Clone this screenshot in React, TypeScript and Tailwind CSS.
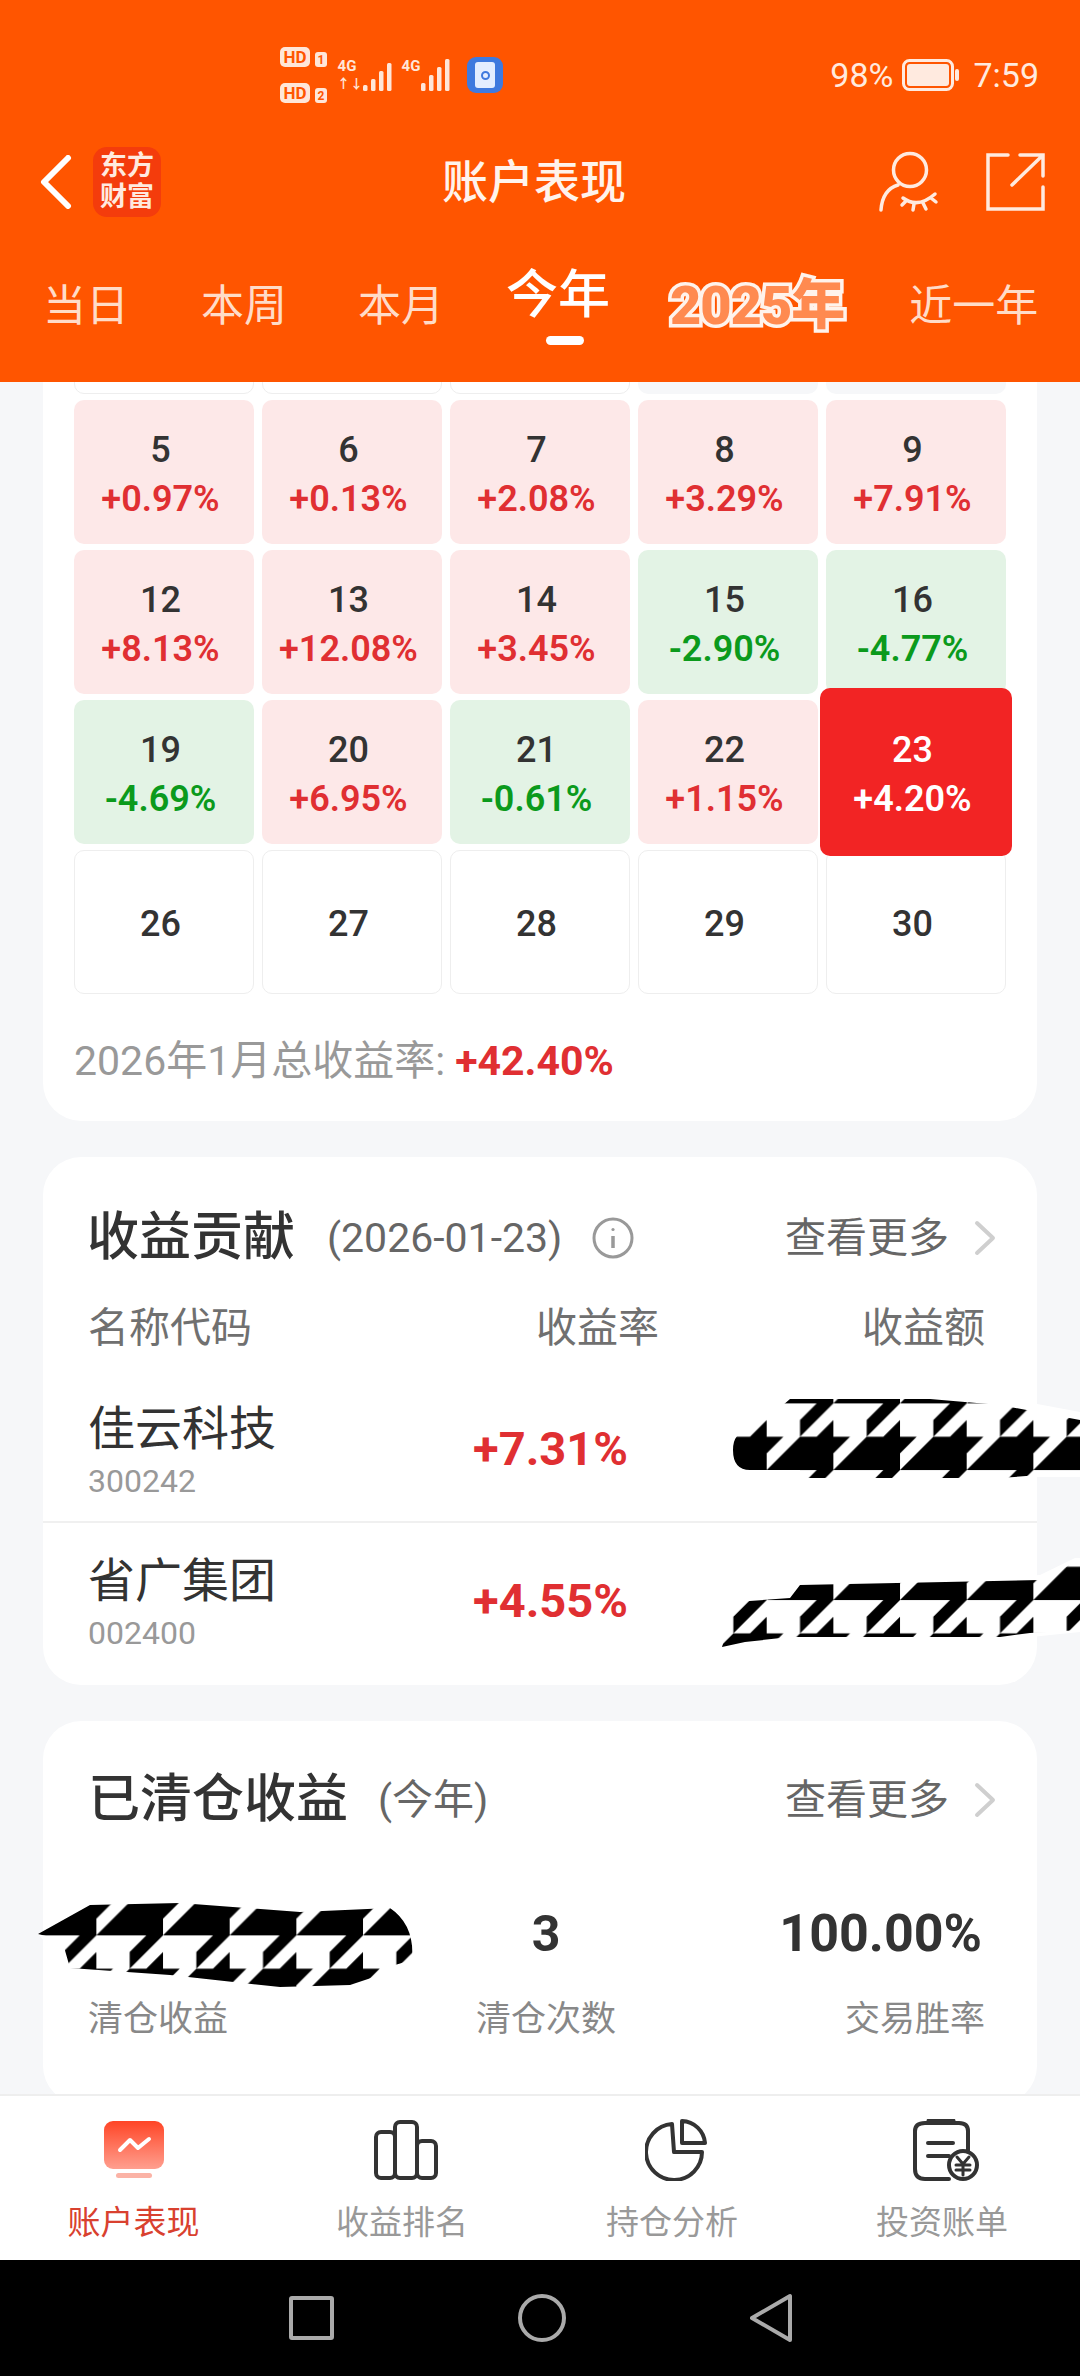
const rows = [
  [
    { day: "", pct: "", kind: "empty" },
    { day: "", pct: "", kind: "empty" },
    { day: "", pct: "", kind: "empty" },
    { day: "", pct: "", kind: "off" },
    { day: "", pct: "", kind: "off" },
  ],
  [
    { day: "5", pct: "+0.97%", kind: "up" },
    { day: "6", pct: "+0.13%", kind: "up" },
    { day: "7", pct: "+2.08%", kind: "up" },
    { day: "8", pct: "+3.29%", kind: "up" },
    { day: "9", pct: "+7.91%", kind: "up" },
  ],
  [
    { day: "12", pct: "+8.13%", kind: "up" },
    { day: "13", pct: "+12.08%", kind: "up" },
    { day: "14", pct: "+3.45%", kind: "up" },
    { day: "15", pct: "-2.90%", kind: "down" },
    { day: "16", pct: "-4.77%", kind: "down" },
  ],
  [
    { day: "19", pct: "-4.69%", kind: "down" },
    { day: "20", pct: "+6.95%", kind: "up" },
    { day: "21", pct: "-0.61%", kind: "down" },
    { day: "22", pct: "+1.15%", kind: "up" },
    { day: "23", pct: "+4.20%", kind: "today" },
  ],
  [
    { day: "26", pct: "", kind: "empty" },
    { day: "27", pct: "", kind: "empty" },
    { day: "28", pct: "", kind: "empty" },
    { day: "29", pct: "", kind: "empty" },
    { day: "30", pct: "", kind: "empty" },
  ],
];

const cellBox: Record<string, string> = {
  empty: "bg-white border border-[#eeeeee]",
  off: "bg-[#f6f7f9]",
  up: "bg-[#fde8e8]",
  down: "bg-[#e3f3e5]",
  today: "bg-[#f22424] relative z-10 -mx-[6px] -my-[12px]",
};

const pctColor: Record<string, string> = {
  up: "text-[#e02f32]",
  down: "text-[#0b9a1c]",
  today: "text-white",
  empty: "",
  off: "",
};

function Cell({ day, pct, kind }: { day: string; pct: string; kind: string }) {
  return (
    <div className={`flex flex-col items-center justify-center rounded-[10px] pt-[5px] pr-[7px] text-[36px] font-medium leading-[49px] ${cellBox[kind]}`}>
      {day && <div className={kind === "today" ? "text-white" : "text-[#333333]"}>{day}</div>}
      {pct && <div className={`font-semibold ${pctColor[kind]}`}>{pct}</div>}
    </div>
  );
}

function Chevron() {
  return (
    <svg width="24" height="36" viewBox="0 0 24 36" fill="none" stroke="#cfcfcf" strokeWidth="4" strokeLinecap="round" strokeLinejoin="round">
      <path d="M4 3 L20 18 L4 33" />
    </svg>
  );
}

function More() {
  return (
    <div className="ml-auto flex items-center gap-[24px] text-[41px] leading-[56px] text-[#666666]">
      <span>查看更多</span>
      <Chevron />
    </div>
  );
}

function HoldingRow({ name, code, pct }: { name: string; code: string; pct: string }) {
  return (
    <div className="grid h-[150px] grid-cols-[240px_300px_1fr] items-center px-[45px]">
      <div className="pt-[14px]">
        <div className="whitespace-nowrap text-[47px] leading-[52px] text-[#333333]">{name}</div>
        <div className="mt-[4px] text-[32px] leading-[44px] text-[#999999]">{code}</div>
      </div>
      <div className="mt-[6px] text-right text-[47px] font-bold leading-[52px] text-[#e02f32]">{pct}</div>
      <div />
    </div>
  );
}

function Redaction({ id, x, y, w, h, tx, ty, blob, clip }: { id: string; x: number; y: number; w: number; h: number; tx: number; ty: number; blob: string; clip: string }) {
  return (
    <svg className="absolute z-20" style={{ left: x, top: y }} width={w} height={h} viewBox={`${x} ${y} ${w} ${h}`}>
      <defs>
        <pattern id={`${id}-t`} patternUnits="userSpaceOnUse" width="8" height="8" patternTransform={`translate(${tx} ${ty}) scale(8.333)`}>
          <path d="M4 4H8V8H4Z M0 4H2L0 6Z M4 4V8H0Z M6 0H8L4 4V2Z M8 2V4H6Z" fill="#000" />
        </pattern>
        <clipPath id={`${id}-c`}>
          <path d={clip} />
        </clipPath>
      </defs>
      <path d={blob} fill="#fff" />
      <rect x={x} y={y} width={w} height={h} fill={`url(#${id}-t)`} clipPath={`url(#${id}-c)`} />
    </svg>
  );
}

function NavIcon({ i }: { i: number }) {
  if (i === 0) {
    return (
      <svg width="60" height="60" viewBox="0 0 60 60" fill="none">
        <defs>
          <linearGradient id="monitor" x1="0" y1="0" x2="0" y2="1">
            <stop offset="0" stopColor="#ff4526" />
            <stop offset="1" stopColor="#ff9f8f" />
          </linearGradient>
        </defs>
        <rect x="0" y="1" width="60" height="48" rx="9" fill="url(#monitor)" />
        <rect x="12" y="53" width="36" height="5" rx="2.5" fill="#fbb3a6" />
        <path d="M16 30 L26 20 L34 28 L45 19" stroke="#fff" strokeWidth="4" strokeLinecap="round" strokeLinejoin="round" />
      </svg>
    );
  }
  if (i === 1) {
    return (
      <svg width="66" height="60" viewBox="0 0 66 60" fill="none" stroke="#333" strokeWidth="4" strokeLinejoin="round">
        <rect x="3" y="12" width="19" height="46" rx="5" />
        <rect x="22" y="2" width="22" height="56" rx="5" />
        <rect x="44" y="21" width="19" height="37" rx="5" />
      </svg>
    );
  }
  if (i === 2) {
    return (
      <svg width="62" height="62" viewBox="0 0 62 62" fill="none" stroke="#333" strokeWidth="4" strokeLinejoin="round" strokeLinecap="round">
        <path d="M27 5 A28 28 0 1 0 57 33 H29 Z" />
        <path d="M37 2 A24 24 0 0 1 60 24 H37 Z" />
      </svg>
    );
  }
  return (
    <svg width="66" height="62" viewBox="0 0 66 62" fill="none" stroke="#333" strokeWidth="4" strokeLinecap="round" strokeLinejoin="round">
      <path d="M36 60 H12 Q2 60 2 50 V12 Q2 4 12 4 H46 Q55 4 55 12 V32" />
      <path d="M16 2 H40" strokeWidth="5" />
      <path d="M15 24 H40 M15 37 H36" />
      <circle cx="50" cy="46" r="14" />
      <path d="M44 38 L50 45 L56 38 M50 45 V56 M43 46 H57 M43 51 H57" strokeWidth="3" />
    </svg>
  );
}

const navItems = ["账户表现", "收益排名", "持仓分析", "投资账单"];

function Signal({ bars }: { bars: number[] }) {
  return (
    <svg width="36" height="34" viewBox="0 0 36 34" fill="#ffe6d8">
      {bars.map((h, i) => (
        <rect key={i} x={i * 8} y={34 - h} width="4.5" height={h} rx="1.5" />
      ))}
    </svg>
  );
}

export default function App() {
  return (
    <div className="relative flex h-[2376px] w-[1080px] flex-col overflow-hidden bg-[#f6f7f9] font-['Roboto','Noto_Sans_CJK_SC',sans-serif]">
      <header className="h-[382px] shrink-0 bg-[#ff5500] text-white">
        <div className="flex h-[136px] items-center pt-[14px] pr-[41px] pl-[280px]">
          <div className="flex w-[57px] flex-col gap-[16px] text-[#ff5500]">
            {["1", "2"].map((n) => (
              <div key={n} className="flex items-end gap-[5px]">
                <span className="flex h-[20px] w-[30px] items-center justify-center rounded-[5px] bg-[#ffe6d8] text-[17px] font-bold leading-none">HD</span>
                <span className="flex h-[15px] w-[12px] items-center justify-center rounded-[3px] bg-[#ffe6d8] text-[12px] font-bold leading-none">{n}</span>
              </div>
            ))}
          </div>
          <div className="flex w-[20px] flex-col text-center text-[15px] font-bold leading-[17px] text-[#ffe6d8]">
            <span>4G</span>
            <span className="text-[13px]">↑↓</span>
          </div>
          <div className="ml-[6px] mt-[-2px]">
            <Signal bars={[6, 12, 20, 28]} />
          </div>
          <div className="ml-[2px] mb-[18px] w-[20px] text-center text-[15px] font-bold leading-[17px] text-[#ffe6d8]">4G</div>
          <div className="mt-[-2px]">
            <Signal bars={[8, 16, 24, 32]} />
          </div>
          <div className="ml-[10px] flex h-[36px] w-[36px] items-center justify-center rounded-[9px] bg-[#3f7ade]">
            <div className="flex h-[26px] w-[20px] items-center justify-center rounded-[3px] bg-[#e4eeff]">
              <div className="h-[9px] w-[9px] rounded-full border-2 border-[#3f7ade]" />
            </div>
          </div>
          <div className="ml-auto flex items-center text-[34px] leading-[40px] text-[#ffeadf]">
            <span>98%</span>
            <svg className="ml-[9px]" width="58" height="32" viewBox="0 0 58 32">
              <rect x="1.5" y="1.5" width="49" height="29" rx="6" fill="none" stroke="#ffeadf" strokeWidth="3" />
              <rect x="5" y="5" width="42" height="22" rx="3" fill="#ffeadf" />
              <rect x="53" y="10" width="4" height="12" rx="2" fill="#ffeadf" />
            </svg>
            <span className="ml-[13px]">7:59</span>
          </div>
        </div>
        <div className="flex h-[92px] items-center pr-[32px] pl-[40px]">
          <svg width="32" height="54" viewBox="0 0 32 54" fill="none" stroke="#ffffff" strokeWidth="6" strokeLinecap="round" strokeLinejoin="round">
            <path d="M28 3 L4 27 L28 51" />
          </svg>
          <div className="ml-[21px] flex h-[70px] w-[68px] flex-col items-center justify-center rounded-[14px] bg-[#f43c0c] text-[27px] font-bold leading-[31px] text-[#ffeadf]">
            <span>东方</span>
            <span>财富</span>
          </div>
          <div className="ml-[281px] text-[46px] font-medium leading-[56px] text-[#fff3ec]">账户表现</div>
          <svg className="ml-auto" width="70" height="70" viewBox="15 15 70 70" fill="none" stroke="#ffeadf" strokeWidth="3.5" strokeLinecap="round">
            <circle cx="50" cy="38" r="16.5" />
            <path d="M21 78 C22 64 28 56 38 53" />
            <path d="M43 66 Q58 77 75 62 M46 69 L42 73 M54 72 L53 78 M63 71 L66 77 M71 66 L76 70" />
          </svg>
          <svg className="ml-[39px]" width="64" height="64" viewBox="124 18 64 64" fill="none" stroke="#ffeadf" strokeWidth="3.5" strokeLinecap="round">
            <path d="M148 23 H128 V77 H183 V55 M152 53 L183 23 M160 23 H183 V44" />
          </svg>
        </div>
        <div className="mt-[34px] flex h-[88px] items-center pl-[43px] text-[43px] leading-[56px] text-[#ffdcc8]">
          <span>当日</span>
          <span className="ml-[72px]">本周</span>
          <span className="ml-[71px]">本月</span>
          <div className="relative ml-[62px] whitespace-nowrap">
            <span className="relative -top-[9px] text-[52px] font-medium text-white">今年</span>
            <div className="absolute left-[40px] top-[59px] h-[9px] w-[38px] rounded-full bg-white" />
          </div>
          <span className="ml-[60px] whitespace-nowrap text-[54px] font-black tracking-[-1px] text-[#ff8a50] [-webkit-text-stroke:7px_#fff3ec] [paint-order:stroke_fill]">2025年</span>
          <span className="ml-[65px] whitespace-nowrap">近一年</span>
        </div>
      </header>

      <main className="min-h-0 flex-1 overflow-hidden px-[43px]">
        <section className="-mt-[132px] rounded-[38px] bg-white px-[31px]">
          <div className="grid auto-rows-[144px] grid-cols-5 gap-x-2 gap-y-[6px]">
            {rows.flat().map((c, i) => (
              <Cell key={i} {...c} />
            ))}
          </div>
          <div className="flex h-[127px] items-center pt-[7px] text-[41px] leading-[48px] text-[#999999]">
            <span>2026年1月总收益率:</span>
            <span className="ml-[10px] font-bold text-[#e02f32]">+42.40%</span>
          </div>
        </section>

        <section className="mt-[36px] rounded-[38px] bg-white pt-[53px] pb-[12px]">
          <div className="flex items-center pr-[40px] pl-[44px]">
            <span className="text-[52px] font-medium leading-[56px] text-[#333333]">收益贡献</span>
            <span className="ml-[32px] text-[41px] leading-[56px] text-[#666666]">(2026-01-23)</span>
            <svg className="ml-[30px]" width="42" height="42" viewBox="0 0 42 42" fill="none" stroke="#999999" strokeWidth="3">
              <circle cx="21" cy="21" r="19" />
              <path d="M21 19 V31" strokeWidth="3.5" />
              <circle cx="21" cy="12.5" r="1.6" fill="#999999" stroke="none" />
            </svg>
            <More />
          </div>
          <div className="mt-[38px] grid grid-cols-[448px_120px_1fr] pr-[52px] pl-[45px] text-[41px] leading-[48px] text-[#707070]">
            <span className="whitespace-nowrap">名称代码</span>
            <span className="whitespace-nowrap text-right">收益率</span>
            <span className="whitespace-nowrap text-right">收益额</span>
          </div>
          <div className="mt-[19px] border-b-2 border-[#f0f0f0]">
            <HoldingRow name="佳云科技" code="300242" pct="+7.31%" />
          </div>
          <HoldingRow name="省广集团" code="002400" pct="+4.55%" />
        </section>

        <section className="mt-[36px] rounded-[38px] bg-white pt-[51px] pb-[60px] pl-[45px]">
          <div className="flex items-center pr-[40px]">
            <span className="text-[52px] font-medium leading-[56px] text-[#333333]">已清仓收益</span>
            <span className="ml-[30px] text-[41px] leading-[56px] text-[#666666]">(今年)</span>
            <More />
          </div>
          <div className="mt-[76px] grid grid-cols-[372px_172px_1fr] pr-[52px] text-[#333333]">
            <div>
              <div className="h-[60px]" />
              <div className="mt-[32px] text-[35px] leading-[48px] text-[#888888]">清仓收益</div>
            </div>
            <div className="text-center">
              <div className="text-[50px] font-bold leading-[60px]">3</div>
              <div className="mt-[32px] whitespace-nowrap text-[35px] leading-[48px] text-[#888888]">清仓次数</div>
            </div>
            <div className="text-right">
              <div className="pr-[3px] text-[52px] font-bold leading-[60px]">100.00%</div>
              <div className="mt-[32px] text-[35px] leading-[48px] text-[#888888]">交易胜率</div>
            </div>
          </div>
        </section>
      </main>

      <nav className="grid h-[166px] shrink-0 grid-cols-[267px_270px_270px_270px] border-t-2 border-[#eeeeee] bg-white">
        {navItems.map((label, i) => (
          <div key={label} className="flex flex-col items-center pt-[23px]">
            <div className={`flex h-[62px] items-center ${i > 0 ? "pl-[8px]" : ""}`}>
              <NavIcon i={i} />
            </div>
            <div className={`mt-[20px] text-[33px] leading-[44px] ${i === 0 ? "text-[#d9412f]" : "text-[#999999]"}`}>{label}</div>
          </div>
        ))}
      </nav>

      <div className="flex h-[116px] shrink-0 items-center justify-center gap-[184px] bg-black">
        <div className="h-[44px] w-[45px] rounded-[3px] border-[4px] border-[#aaaaaa]" />
        <div className="h-[48px] w-[48px] rounded-full border-[4px] border-[#aaaaaa]" />
        <svg width="42" height="50" viewBox="0 0 42 50" fill="none" stroke="#aaaaaa" strokeWidth="4" strokeLinejoin="round">
          <path d="M40 3 V47 L2 25 Z" />
        </svg>
      </div>

      <Redaction
        id="r1"
        x={730}
        y={1395}
        w={350}
        h={90}
        tx={766.7}
        ty={1403.4}
        blob="M740 1430 L800 1397 H1000 L1080 1412 V1477 H790 L745 1471 Q733 1462 733 1450 Z"
        clip="M733 1450 Q733 1432 748 1432 L760 1425 L790 1399 L930 1399 L1000 1405 L1080 1420 L1080 1472 L1000 1478 L800 1478 L800 1470 L750 1470 Q733 1470 733 1450 Z"
      />
      <Redaction
        id="r2"
        x={705}
        y={1555}
        w={375}
        h={95}
        tx={766.7}
        ty={1533.4}
        blob="M712 1640 L735 1602 L800 1590 L1040 1575 L1075 1558 L1080 1558 V1632 L1000 1640 L730 1648 Z"
        clip="M722 1647 L735 1602 L790 1598 L800 1585 L1040 1580 L1080 1560 V1630 L1030 1633 L1000 1637 L790 1637 L745 1642 Z"
      />
      <Redaction
        id="r3"
        x={35}
        y={1900}
        w={380}
        h={90}
        tx={29.7}
        ty={1868.7}
        blob="M38 1934 L90 1903 L180 1901 L300 1910 L392 1906 Q416 1925 414 1962 L396 1970 L350 1987 L280 1989 L170 1977 L70 1970 Z"
        clip="M38 1934 L90 1905 L180 1903 L300 1912 L390 1908 Q415 1925 412 1960 L395 1965 L380 1975 L350 1985 L280 1987 L170 1975 L70 1968 L62 1940 Z"
      />
    </div>
  );
}
